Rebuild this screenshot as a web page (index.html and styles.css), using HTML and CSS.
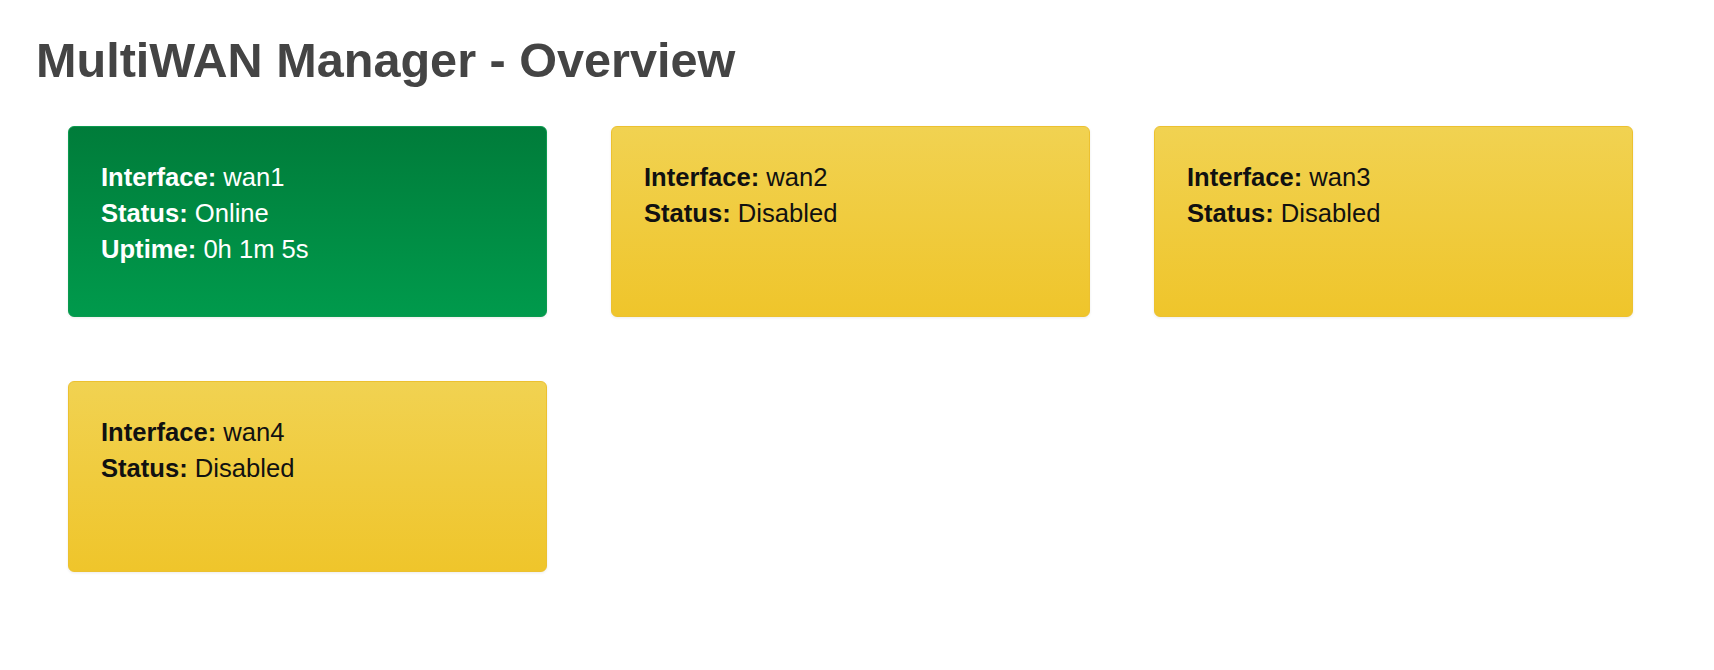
FILE: index.html
```html
<!DOCTYPE html>
<html lang="en">
<head>
    <meta charset="UTF-8">
    <meta name="viewport" content="width=device-width, initial-scale=1.0">
    <title>MultiWAN Manager - Overview</title>
    <link rel="stylesheet" href="styles.css">
</head>
<body>
    <h1>MultiWAN Manager - Overview</h1>

    <div class="wan-grid">
        <div class="wan-card online">
            <div><strong>Interface:</strong> wan1</div>
            <div><strong>Status:</strong> Online</div>
            <div><strong>Uptime:</strong> 0h 1m 5s</div>
        </div>
        <div class="wan-card disabled">
            <div><strong>Interface:</strong> wan2</div>
            <div><strong>Status:</strong> Disabled</div>
        </div>
        <div class="wan-card disabled">
            <div><strong>Interface:</strong> wan3</div>
            <div><strong>Status:</strong> Disabled</div>
        </div>
        <div class="wan-card disabled">
            <div><strong>Interface:</strong> wan4</div>
            <div><strong>Status:</strong> Disabled</div>
        </div>
    </div>
</body>
</html>
```

FILE: styles.css
```css
body {
    font-family: 'Liberation Sans', Helvetica, Arial, sans-serif;
    margin: 0;
    padding: 33px 36px;
    background-color: #fff;
    color: #111;
}

h1 {
    margin: 0 0 6px 0;
    font-size: 48.6px;
    line-height: 55px;
    font-weight: bold;
    color: #444;
}

.wan-grid {
    display: grid;
    grid-template-columns: repeat(3, 479px);
    gap: 64px;
    padding: 32px;
}

.wan-card {
    box-sizing: border-box;
    height: 191px;
    padding: 32px;
    border: 1px solid;
    border-radius: 6px;
    font-size: 25.6px;
    line-height: 36px;
    box-shadow: 0 1px 3px rgba(0,0,0,0.08);
}

.wan-card strong {
    font-weight: bold;
}

.online {
    background: linear-gradient(to bottom, #007c3a, #009a4c);
    border-color: #0b9a4f;
    color: #fff;
}

.disabled {
    background: linear-gradient(to bottom, #f1d251, #efc52b);
    border-color: #ecc130;
    color: #111;
}
```
